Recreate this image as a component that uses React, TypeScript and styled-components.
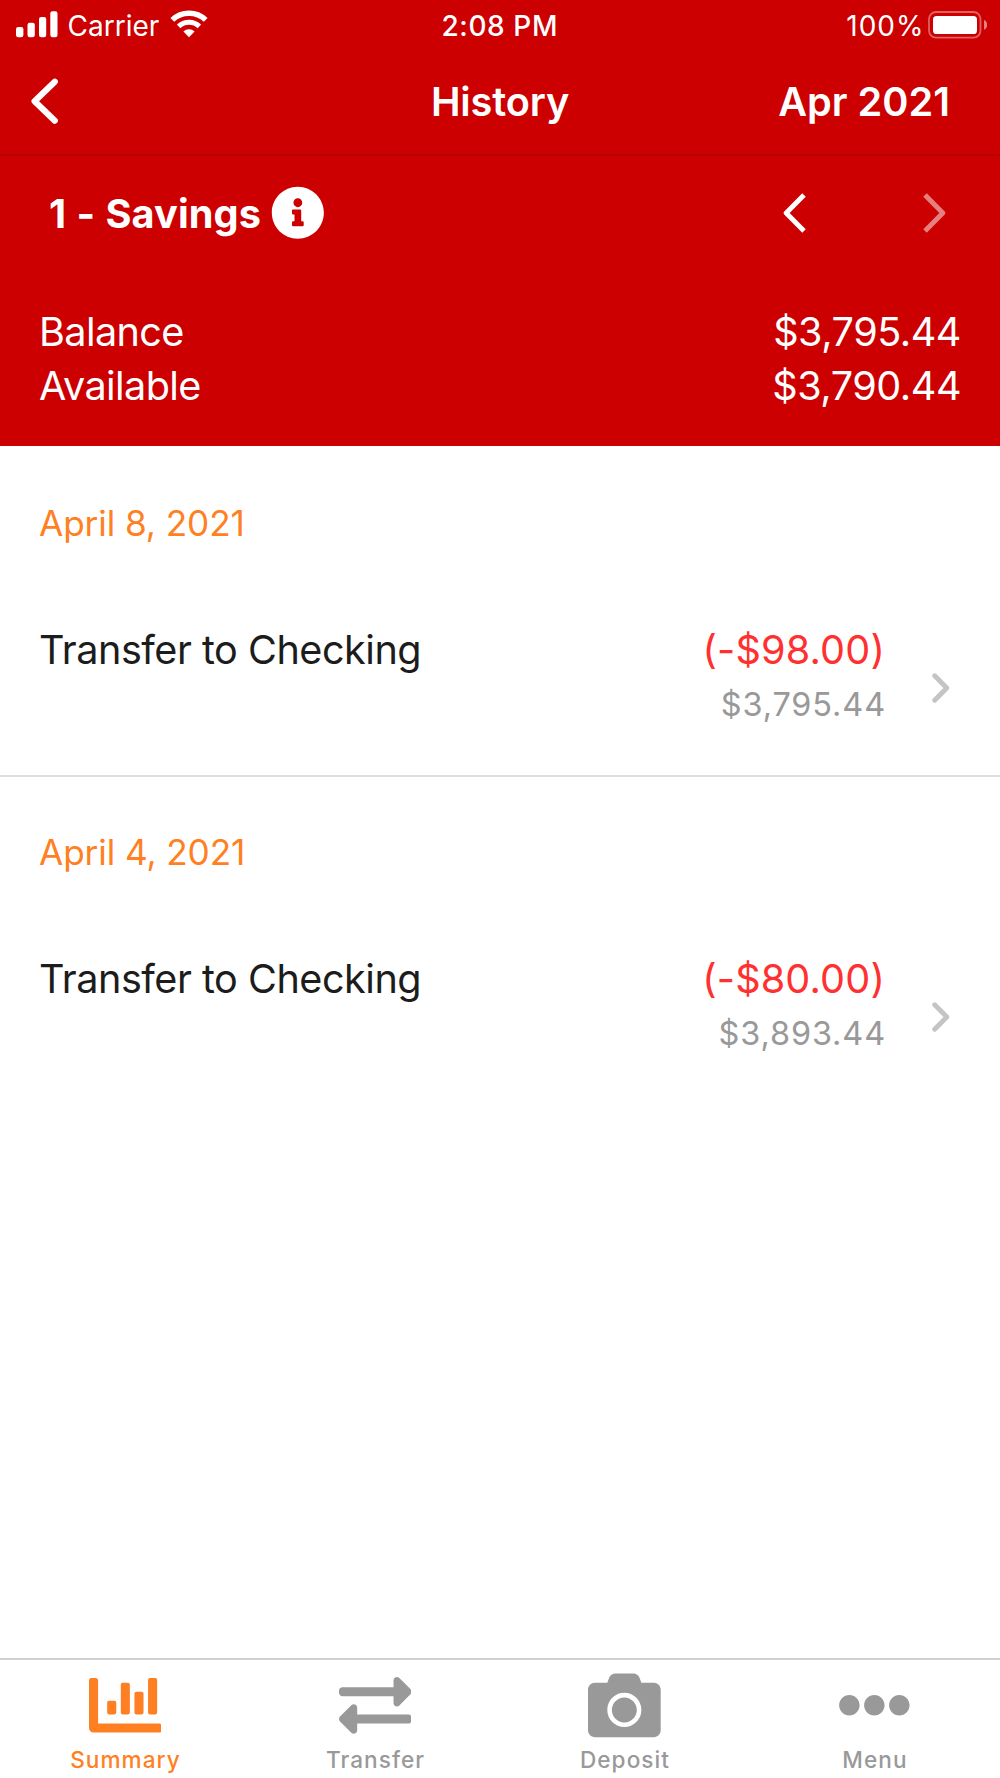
import React from 'react';
import styled, { createGlobalStyle } from 'styled-components';
import { FaCamera, FaChartBar, FaEllipsisH, FaExchangeAlt, FaInfoCircle } from 'react-icons/fa';

const RED = '#cc0000';
const ORANGE = '#ff7f23';
const GRAY = '#999999';

const GlobalStyle = createGlobalStyle`
  * { box-sizing: border-box; }
  body {
    margin: 0;
    background: #fff;
    font-family: Inter, "Liberation Sans", sans-serif;
  }
  svg { display: block; flex: none; }
`;

const Screen = styled.div`
  width: 1000px;
  height: 1778px;
  display: flex;
  flex-direction: column;
  background: #fff;
`;

const Header = styled.header`
  height: 446px;
  background: ${RED};
  color: #fff;
`;

const StatusBar = styled.div`
  height: 50px;
  display: grid;
  grid-template-columns: 1fr auto 1fr;
  align-items: center;
  padding: 1px 13px 0 16px;
  font-size: 28px;
  line-height: 36px;
`;

const StatusGroup = styled.div<{ $end?: boolean }>`
  display: flex;
  align-items: center;
  justify-content: ${(p) => (p.$end ? 'flex-end' : 'flex-start')};

  svg { margin-bottom: 2px; }
`;

const Carrier = styled.span`
  margin: 0 11px 0 9.5px;
`;

const Clock = styled.span`
  font-weight: 500;
  letter-spacing: 0.6px;
  margin-right: 3.5px;
`;

const BatteryLevel = styled.span`
  letter-spacing: 1px;
  margin-right: 3.5px;
`;

const NavBar = styled.nav`
  height: 106px;
  display: grid;
  grid-template-columns: 1fr auto 1fr;
  align-items: center;
  padding: 0 50px 2px 31px;
  border-bottom: 2px solid #b90000;
  font-size: 39.7px;
  font-weight: 600;
  line-height: 48px;
`;

const NavTitle = styled.h1`
  margin: 0 0 0 19px;
  padding-top: 2px;
  font: inherit;
  letter-spacing: -0.15px;
`;

const Month = styled.span`
  justify-self: end;
  padding-top: 2px;
`;

const PlainButton = styled.button`
  display: flex;
  align-items: center;
  padding: 0;
  border: 0;
  background: none;
  color: inherit;
`;

const AccountRow = styled.div`
  height: 113px;
  display: flex;
  align-items: center;
  padding: 0 54px 0 49px;
`;

const AccountName = styled.h2`
  flex: 1;
  display: flex;
  align-items: center;
  gap: 9.5px;
  margin: 0;
  font-size: 39.7px;
  font-weight: 700;
  line-height: 48px;
`;

const AccountLabel = styled.span`
  padding-top: 2px;
  letter-spacing: 0.1px;
  word-spacing: 0.8px;
`;

const Pager = styled.div`
  display: flex;
  gap: 117px;
`;

const Totals = styled.dl`
  margin: 0;
  padding: 36px 39px 0 39px;
`;

const TotalRow = styled.div`
  display: flex;
  justify-content: space-between;
  font-size: 39.6px;
  line-height: 54px;
`;

const TotalLabel = styled.dt`
  letter-spacing: -0.6px;
`;

const TotalValue = styled.dd`
  margin: 0;
  letter-spacing: -0.45px;
`;

const History = styled.main`
  flex: 1;
  padding-top: 2px;
`;

const DayGroup = styled.section`
  height: 329px;
  padding: 50px 50px 0 39px;

  &:not(:last-child) {
    border-bottom: 2px solid #dedede;
  }
`;

const DayTitle = styled.h3`
  margin: 0;
  font-size: 35.2px;
  font-weight: 400;
  line-height: 50px;
  letter-spacing: -0.1px;
  color: ${ORANGE};
`;

const Transaction = styled.div`
  display: flex;
  align-items: flex-start;
  margin-top: 75px;
`;

const Description = styled.span`
  flex: 1;
  font-size: 39.6px;
  line-height: 54px;
  letter-spacing: -0.48px;
  color: #1c1c1c;
`;

const Amounts = styled.div`
  display: flex;
  flex-direction: column;
  align-items: flex-end;
`;

const Amount = styled.span`
  font-size: 39.6px;
  line-height: 54px;
  letter-spacing: 0.18px;
  margin-right: 1px;
  color: #ff3030;
`;

const RunningBalance = styled.span`
  font-size: 32.5px;
  line-height: 54px;
  letter-spacing: 0.85px;
  margin-top: 1px;
  color: ${GRAY};
`;

const Disclosure = styled.div`
  margin: 50px 0 0 46px;
`;

const TabBar = styled.footer`
  height: 120px;
  display: grid;
  grid-template-columns: repeat(4, 1fr);
  border-top: 2px solid #d0d0d0;
`;

const Tab = styled.button<{ $active?: boolean }>`
  display: flex;
  flex-direction: column;
  align-items: center;
  padding: 9px 0 0;
  border: 0;
  background: none;
  font-family: inherit;
  font-size: 22.6px;
  font-weight: 500;
  line-height: 28px;
  letter-spacing: 1.06px;
  color: ${(p) => (p.$active ? ORANGE : GRAY)};

  &:nth-child(n + 3) {
    padding-right: 1px;
  }
`;

const TabLabel = styled.span`
  margin-top: 4px;
  padding-left: 1px;
`;

const SignalIcon = () => (
  <svg width="42" height="27" viewBox="0 0 42 27" fill="#fff">
    <rect x="0" y="16" width="7.4" height="10.3" rx="2.2" />
    <rect x="11.5" y="11.8" width="7.3" height="14.5" rx="2.2" />
    <rect x="23" y="6" width="7.2" height="20.3" rx="2.2" />
    <rect x="34.3" y="0.3" width="7.2" height="26" rx="2.2" />
  </svg>
);

const WifiIcon = () => (
  <svg width="38" height="29" viewBox="0 0 38 29" fill="none" stroke="#fff">
    <path d="M2.3 9.9A24.1 24.1 0 0 1 35.7 9.9" strokeWidth="5.4" />
    <path d="M8.6 16.4A15 15 0 0 1 29.4 16.4" strokeWidth="5" />
    <path d="M19 27.2L13.4 21.6A7.9 7.9 0 0 1 24.6 21.6Z" fill="#fff" stroke="none" />
  </svg>
);

const BatteryIcon = () => (
  <svg width="59" height="28" viewBox="0 0 59 28">
    <rect x="1" y="1" width="51.5" height="25.6" rx="7" fill="none" stroke="#fff" strokeOpacity="0.38" strokeWidth="1.8" />
    <rect x="5" y="5" width="44" height="18" rx="3.6" fill="#fff" />
    <path d="M56 9c2 .8 3.2 2.6 3.2 4.9s-1.2 4.1-3.2 4.9z" fill="#fff" fillOpacity="0.5" />
  </svg>
);

const BackIcon = () => (
  <svg width="27" height="46" viewBox="0 0 27 46" fill="none" stroke="#fff" strokeWidth="6.2" strokeLinecap="round" strokeLinejoin="round">
    <path d="M23.8 3.7L3.6 23.2L23.8 42.7" />
  </svg>
);

const PagerIcon = ({ next }: { next?: boolean }) => (
  <svg width="23" height="40" viewBox="0 0 23 40" fill="none" stroke="#fff" strokeOpacity={next ? 0.5 : 1} strokeWidth="4.9" strokeLinejoin="round">
    <path d={next ? 'M2 2.1L19.8 20L2 37.9' : 'M21 2.1L3.2 20L21 37.9'} />
  </svg>
);

const DisclosureIcon = () => (
  <svg width="18" height="30" viewBox="0 0 18 30" fill="none" stroke="#c4c4c6" strokeWidth="4.8" strokeLinecap="round" strokeLinejoin="round">
    <path d="M2.7 2.8L14.8 15L2.7 27.2" />
  </svg>
);

const totals = [
  { label: 'Balance', value: '$3,795.44' },
  { label: 'Available', value: '$3,790.44' },
];

const days = [
  { date: 'April 8, 2021', text: 'Transfer to Checking', amount: '(-$98.00)', balance: '$3,795.44' },
  { date: 'April 4, 2021', text: 'Transfer to Checking', amount: '(-$80.00)', balance: '$3,893.44' },
];

const tabs = [
  { label: 'Summary', Icon: FaChartBar, active: true },
  { label: 'Transfer', Icon: FaExchangeAlt },
  { label: 'Deposit', Icon: FaCamera },
  { label: 'Menu', Icon: FaEllipsisH },
];

export default function App() {
  return (
    <>
      <GlobalStyle />
      <Screen>
        <Header>
          <StatusBar>
            <StatusGroup>
              <SignalIcon />
              <Carrier>Carrier</Carrier>
              <WifiIcon />
            </StatusGroup>
            <Clock>2:08 PM</Clock>
            <StatusGroup $end>
              <BatteryLevel>100%</BatteryLevel>
              <BatteryIcon />
            </StatusGroup>
          </StatusBar>
          <NavBar>
            <PlainButton aria-label="Back">
              <BackIcon />
            </PlainButton>
            <NavTitle>History</NavTitle>
            <Month>Apr 2021</Month>
          </NavBar>
          <AccountRow>
            <AccountName>
              <AccountLabel>1 - Savings</AccountLabel>
              <FaInfoCircle size={53.7} />
            </AccountName>
            <Pager>
              <PlainButton aria-label="Previous account">
                <PagerIcon />
              </PlainButton>
              <PlainButton aria-label="Next account" disabled>
                <PagerIcon next />
              </PlainButton>
            </Pager>
          </AccountRow>
          <Totals>
            {totals.map((t) => (
              <TotalRow key={t.label}>
                <TotalLabel>{t.label}</TotalLabel>
                <TotalValue>{t.value}</TotalValue>
              </TotalRow>
            ))}
          </Totals>
        </Header>
        <History>
          {days.map((d) => (
            <DayGroup key={d.date}>
              <DayTitle>{d.date}</DayTitle>
              <Transaction>
                <Description>{d.text}</Description>
                <Amounts>
                  <Amount>{d.amount}</Amount>
                  <RunningBalance>{d.balance}</RunningBalance>
                </Amounts>
                <Disclosure>
                  <DisclosureIcon />
                </Disclosure>
              </Transaction>
            </DayGroup>
          ))}
        </History>
        <TabBar>
          {tabs.map(({ label, Icon, active }) => (
            <Tab key={label} $active={active}>
              <Icon size={72.7} />
              <TabLabel>{label}</TabLabel>
            </Tab>
          ))}
        </TabBar>
      </Screen>
    </>
  );
}
